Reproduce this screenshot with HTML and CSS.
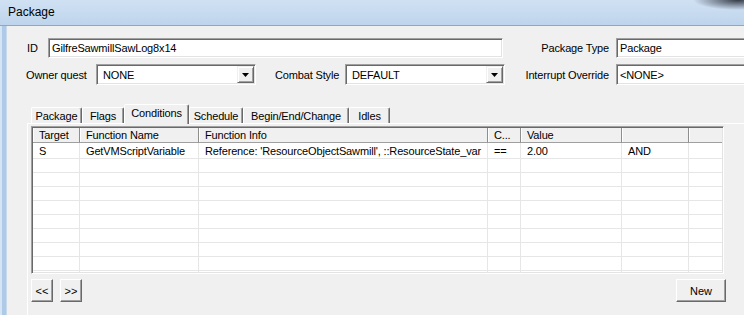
FILE: index.html
```html
<!DOCTYPE html>
<html lang="en">
  <head>
    <meta charset="UTF-8" />
    <title>Package</title>
    <link rel="stylesheet" href="styles.css">
  </head>
  <body>
    <div class="window">
      <div class="titlebar">Package</div>
      <div class="main">
        <div class="frame"></div>
        <div class="client">
          <div class="field-row row-id">
            <span class="lbl lbl-id">ID</span>
            <div class="textbox box-id">GilfreSawmillSawLog8x14</div>
            <span class="lbl lbl-right">Package Type</span>
            <div class="textbox box-right">Package</div>
          </div>
          <div class="field-row row-owner">
            <span class="lbl lbl-owner">Owner quest</span>
            <div class="textbox combo">
              <span class="combo-text">NONE</span>
              <span class="combo-btn"><svg width="7" height="4" viewBox="0 0 7 4"><path d="M0 0h7L3.5 4z" fill="#000"/></svg></span>
            </div>
            <span class="lbl lbl-combat">Combat Style</span>
            <div class="textbox combo">
              <span class="combo-text">DEFAULT</span>
              <span class="combo-btn"><svg width="7" height="4" viewBox="0 0 7 4"><path d="M0 0h7L3.5 4z" fill="#000"/></svg></span>
            </div>
            <span class="lbl lbl-interrupt">Interrupt Override</span>
            <div class="textbox box-right">&lt;NONE&gt;</div>
          </div>

          <div class="tabs">
            <div class="tab tab-package">Package</div>
            <div class="tab tab-flags">Flags</div>
            <div class="tab tab-conditions active">Conditions</div>
            <div class="tab tab-schedule">Schedule</div>
            <div class="tab tab-begin">Begin/End/Change</div>
            <div class="tab tab-idles">Idles</div>
          </div>

          <div class="panel">
            <div class="grid-box">
              <div class="g-row g-head">
                <div class="cell">Target</div>
                <div class="cell">Function Name</div>
                <div class="cell">Function Info</div>
                <div class="cell">C...</div>
                <div class="cell">Value</div>
                <div class="cell"></div>
                <div class="cell filler"></div>
              </div>
              <div class="g-row g-first">
                <div class="cell">S</div>
                <div class="cell">GetVMScriptVariable</div>
                <div class="cell">Reference: 'ResourceObjectSawmill', ::ResourceState_var</div>
                <div class="cell">==</div>
                <div class="cell">2.00</div>
                <div class="cell">AND</div>
                <div class="cell filler"></div>
              </div>
              <div class="g-row"><div class="cell"></div><div class="cell"></div><div class="cell"></div><div class="cell"></div><div class="cell"></div><div class="cell"></div><div class="cell filler"></div></div>
              <div class="g-row"><div class="cell"></div><div class="cell"></div><div class="cell"></div><div class="cell"></div><div class="cell"></div><div class="cell"></div><div class="cell filler"></div></div>
              <div class="g-row"><div class="cell"></div><div class="cell"></div><div class="cell"></div><div class="cell"></div><div class="cell"></div><div class="cell"></div><div class="cell filler"></div></div>
              <div class="g-row"><div class="cell"></div><div class="cell"></div><div class="cell"></div><div class="cell"></div><div class="cell"></div><div class="cell"></div><div class="cell filler"></div></div>
              <div class="g-row"><div class="cell"></div><div class="cell"></div><div class="cell"></div><div class="cell"></div><div class="cell"></div><div class="cell"></div><div class="cell filler"></div></div>
              <div class="g-row"><div class="cell"></div><div class="cell"></div><div class="cell"></div><div class="cell"></div><div class="cell"></div><div class="cell"></div><div class="cell filler"></div></div>
              <div class="g-row"><div class="cell"></div><div class="cell"></div><div class="cell"></div><div class="cell"></div><div class="cell"></div><div class="cell"></div><div class="cell filler"></div></div>
              <div class="g-row"><div class="cell"></div><div class="cell"></div><div class="cell"></div><div class="cell"></div><div class="cell"></div><div class="cell"></div><div class="cell filler"></div></div>
              <div class="g-row"><div class="cell"></div><div class="cell"></div><div class="cell"></div><div class="cell"></div><div class="cell"></div><div class="cell"></div><div class="cell filler"></div></div>
            </div>
            <div class="grid-buttons">
              <button class="btn btn-nav">&lt;&lt;</button>
              <button class="btn btn-nav btn-next">&gt;&gt;</button>
              <button class="btn btn-new">New</button>
            </div>
          </div>
        </div>
      </div>
    </div>
  </body>
</html>
```

FILE: styles.css
```css
* {
  box-sizing: border-box;
}

body {
  margin: 0;
  font-family: "Liberation Sans", Arial, sans-serif;
  font-size: 11px;
  letter-spacing: -0.15px;
  color: #000;
  background: #f0f0f0;
}

.window {
  width: 744px;
  height: 315px;
  overflow: hidden;
  display: flex;
  flex-direction: column;
}

.titlebar {
  height: 26px;
  padding-left: 8px;
  line-height: 25px;
  font-size: 12px;
  letter-spacing: 0;
  background:
    radial-gradient(ellipse 45px 10px at 738px 0, rgba(25, 30, 40, 0.85), rgba(25, 30, 40, 0)),
    linear-gradient(#d0e1f3, #bed4ec);
  border-bottom: 1px solid #8ea7c3;
}

.main {
  flex: 1;
  display: flex;
}

.frame {
  width: 7px;
  background: linear-gradient(to right, #d6e5f5 0 2px, #aecae7 2px 6px, #c8d9ec 6px);
}

.client {
  flex: 1;
  min-width: 0;
  background: #f0f0f0;
  overflow: hidden;
}

/* form rows */
.field-row {
  display: flex;
  align-items: center;
  white-space: nowrap;
}

.row-id {
  margin-top: 12px;
  height: 20px;
}

.row-owner {
  margin-top: 6px;
  height: 21px;
}

.lbl {
  flex-shrink: 0;
}

.lbl-id {
  margin-left: 20px;
  width: 21px;
}

.lbl-owner {
  margin-left: 19px;
  width: 70px;
}

.lbl-combat {
  margin-left: 19px;
  width: 70px;
}

.lbl-right {
  width: 113px;
  text-align: right;
  padding-right: 7px;
}

.lbl-interrupt {
  width: 111px;
  text-align: right;
  padding-right: 7px;
}

.textbox {
  flex-shrink: 0;
  height: 100%;
  display: flex;
  align-items: center;
  background: #fff;
  border: 1px solid;
  border-color: #a0a0a0 #fff #fff #a0a0a0;
  box-shadow: inset 1px 1px 0 #696969, inset -1px -1px 0 #e3e3e3;
  padding-left: 3px;
}

.box-id {
  width: 455px;
}

.box-right {
  width: 140px;
}

.combo {
  width: 160px;
  padding-left: 6px;
}

.combo-text {
  flex: 1;
}

.combo-btn {
  width: 17px;
  height: 17px;
  margin-right: 1px;
  display: flex;
  align-items: center;
  justify-content: center;
  background: #f0f0f0;
  border: 1px solid;
  border-color: #f0f0f0 #696969 #696969 #f0f0f0;
  box-shadow: inset 1px 1px 0 #fff, inset -1px -1px 0 #a0a0a0;
}

/* tabs */
.tabs {
  display: flex;
  align-items: flex-end;
  height: 19px;
  margin-top: 19px;
  margin-left: 24px;
}

.tab {
  height: 16px;
  line-height: 16px;
  text-align: center;
  border: 1px solid;
  border-bottom: 0;
  border-color: #fff #696969 transparent #fff;
  border-radius: 2px 2px 0 0;
  box-shadow: inset -1px 0 0 #a0a0a0;
}

.tab.active {
  position: relative;
  z-index: 1;
  height: 20px;
  line-height: 17px;
  margin-bottom: -1px;
  background: #f0f0f0;
}

.tab-package { width: 51px; }
.tab-flags { width: 42px; }
.tab-conditions { width: 65px; }
.tab-schedule { width: 54px; }
.tab-begin { width: 106px; }
.tab-idles { width: 41px; }

.panel {
  margin-left: 20px;
  height: 200px;
  border-top: 1px solid #fff;
  border-left: 1px solid #fff;
  padding: 2px 0 0 3px;
}

/* grid */
.grid-box {
  width: 693px;
  height: 148px;
  overflow: hidden;
  background: #fff;
  border: 1px solid;
  border-color: #a0a0a0 #fff #fff #a0a0a0;
  box-shadow: inset 1px 1px 0 #696969, inset -1px -1px 0 #e3e3e3;
  padding: 1px;
}

.g-row {
  display: grid;
  grid-template-columns: 47px 119px 289px 33px 101px 67px 33px;
  height: 14px;
}

.cell {
  border-right: 1px solid #e6e6e6;
  border-bottom: 1px solid #e6e6e6;
  padding-left: 6px;
  white-space: nowrap;
  overflow: hidden;
  line-height: 13px;
}

.cell.filler {
  border-right: 0;
}

.g-head {
  height: 15px;
  background: #f0f0f0;
}

.g-head .cell {
  border-right: 1px solid #8e8e8e;
  border-bottom: 1px solid #a0a0a0;
  box-shadow: inset 1px 0 0 #fff;
  line-height: 14px;
}

.g-head .cell.filler {
  border-right: 0;
}

.g-first {
  height: 16px;
}

.g-first .cell {
  line-height: 16px;
}

/* buttons */
.grid-buttons {
  display: flex;
  width: 695px;
  margin-top: 5px;
}

.btn {
  height: 23px;
  padding: 0;
  font: inherit;
  color: #000;
  background: #f0f0f0;
  border: 1px solid;
  border-color: #fff #696969 #696969 #fff;
  box-shadow: inset -1px -1px 0 #a0a0a0;
}

.btn-nav {
  width: 22px;
}

.btn-next {
  margin-left: 7px;
}

.btn-new {
  width: 50px;
  margin-left: auto;
}
```
